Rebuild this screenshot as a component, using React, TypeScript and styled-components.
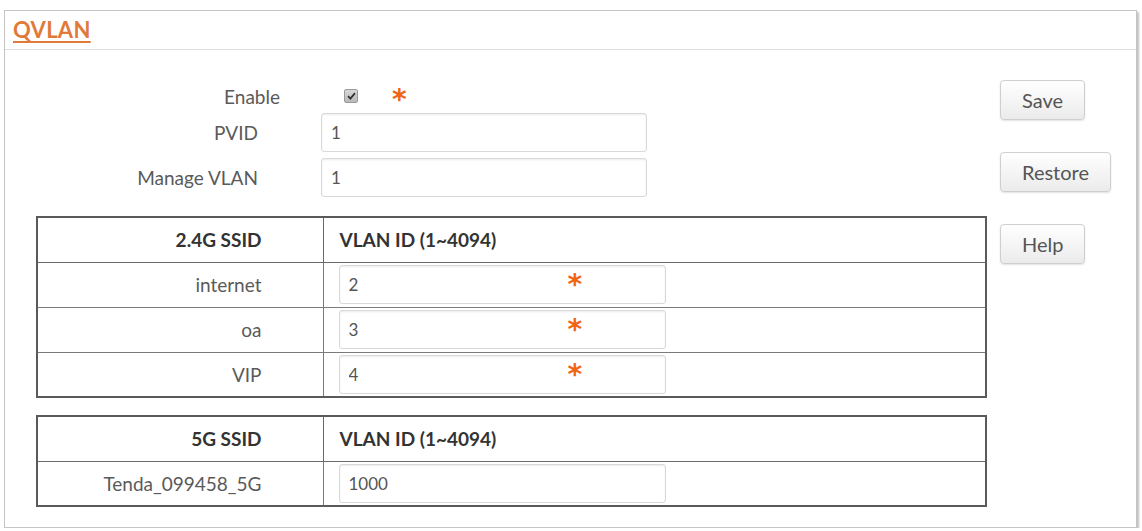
import React from "react";
import styled, { createGlobalStyle } from "styled-components";

const GlobalStyle = createGlobalStyle`
  html, body { margin: 0; padding: 0; background: #ffffff; }
  body { font-family: Lato, "Open Sans", "Liberation Sans", sans-serif; color: #5a5a5a; }
  * { box-sizing: border-box; }
`;

const Frame = styled.div`
  margin: 10px 0 0 4px;
  width: 1133px;
  height: 518px;
  border: 1px solid #c4c4c4;
  box-shadow: 2px 2px 2px rgba(0, 0, 0, 0.25);
  background: #fff;
`;

const Header = styled.div`
  height: 39px;
  border-bottom: 1px solid #dcdcdc;
  padding-left: 8px;
  display: flex;
  align-items: flex-end;
`;

const Title = styled.span`
  font-size: 22px;
  font-weight: 700;
  color: #e07a38;
  text-decoration: underline;
  text-underline-offset: 3px;
  text-decoration-thickness: 2px;
  line-height: 1;
  padding-bottom: 8px;
  letter-spacing: 0.3px;
`;

const Body = styled.div`
  display: flex;
  align-items: flex-start;
  padding-left: 31px;
`;

const Main = styled.div`
  width: 951px;
  padding-top: 35px;
  display: flex;
  flex-direction: column;
`;

const Side = styled.div`
  margin-left: 13px;
  padding-top: 30px;
  display: flex;
  flex-direction: column;
  align-items: flex-start;
  gap: 32px;
`;

const Button = styled.button`
  height: 40px;
  padding: 0 21px;
  font-family: inherit;
  font-size: 20px;
  color: #555;
  background: linear-gradient(#ffffff, #ebebeb);
  border: 1px solid #cfcfcf;
  border-radius: 4px;
  box-shadow: 0 1px 2px rgba(0, 0, 0, 0.12);
`;

const Form = styled.div`
  display: flex;
  flex-direction: column;
  gap: 6px;
`;

const FormRow = styled.div`
  display: flex;
  align-items: center;
`;

const Label = styled.div<{ $width: number }>`
  width: ${(p) => p.$width}px;
  text-align: right;
  font-size: 19px;
  color: #5a5a5a;
`;

const Control = styled.div<{ $gap: number }>`
  margin-left: ${(p) => p.$gap}px;
  display: flex;
  align-items: center;
`;

const Check = styled.span`
  width: 14px;
  height: 14px;
  border: 1px solid #9a9a9a;
  border-radius: 2px;
  background: linear-gradient(#d8d8d8, #b9b9b9);
  display: inline-flex;
  align-items: center;
  justify-content: center;
`;

const Star = styled.span`
  color: #f06414;
  font-family: "DejaVu Sans", sans-serif;
  font-size: 28px;
  font-weight: 700;
  line-height: 28px;
  height: 28px;
  display: inline-block;
`;

const EnableStar = styled(Star)`
  margin-left: 34px;
  margin-top: 8px;
`;

const TextInput = styled.input<{ $w: number }>`
  width: ${(p) => p.$w}px;
  height: 39px;
  border: 1px solid #d9d9d9;
  border-radius: 3px;
  box-shadow: inset 0 1px 2px rgba(0, 0, 0, 0.08);
  padding: 0 9px;
  font-family: inherit;
  font-size: 17px;
  color: #555;
  background: #fff;
  outline: none;
`;

const Table = styled.table<{ $mt: number }>`
  width: 951px;
  margin-top: ${(p) => p.$mt}px;
  border-collapse: collapse;
  border: 2px solid #5a5a5a;
  table-layout: fixed;
`;

const HeadCell = styled.th<{ $first?: boolean }>`
  height: 45px;
  border: 1px solid #6a6a6a;
  font-size: 19px;
  font-weight: 700;
  color: #333;
  text-align: ${(p) => (p.$first ? "right" : "left")};
  padding: ${(p) => (p.$first ? "0 61px 0 0" : "0 0 0 16px")};
  width: ${(p) => (p.$first ? "286px" : "auto")};
`;

const Cell = styled.td<{ $first?: boolean }>`
  height: 45px;
  border: 1px solid #7a7a7a;
  font-size: 19px;
  color: #5a5a5a;
  text-align: ${(p) => (p.$first ? "right" : "left")};
  padding: ${(p) => (p.$first ? "0 61px 0 0" : "0 0 0 15px")};
  vertical-align: middle;
`;

const InputWrap = styled.div`
  position: relative;
  display: inline-block;
  vertical-align: middle;
`;

const OverStar = styled(Star)`
  position: absolute;
  left: 229px;
  top: 6px;
`;

const CheckMark = () => (
  <svg width="9" height="8" viewBox="0 0 9 8">
    <path d="M1 4.2 L3.4 6.6 L8 1.2" stroke="#333" strokeWidth="1.8" fill="none" />
  </svg>
);

const ssids24 = [
  { name: "internet", vlan: "2" },
  { name: "oa", vlan: "3" },
  { name: "VIP", vlan: "4" },
];

export default function App() {
  return (
    <>
      <GlobalStyle />
      <Frame>
        <Header>
          <Title>QVLAN</Title>
        </Header>
        <Body>
          <Main>
            <Form>
              <FormRow style={{ height: 22 }}>
                <Label $width={244}>Enable</Label>
                <Control $gap={64}>
                  <Check>
                    <CheckMark />
                  </Check>
                  <EnableStar>*</EnableStar>
                </Control>
              </FormRow>
              <FormRow>
                <Label $width={222}>PVID</Label>
                <Control $gap={63}>
                  <TextInput $w={326} defaultValue="1" />
                </Control>
              </FormRow>
              <FormRow>
                <Label $width={222}>Manage VLAN</Label>
                <Control $gap={63}>
                  <TextInput $w={326} defaultValue="1" />
                </Control>
              </FormRow>
            </Form>

            <Table $mt={19}>
              <thead>
                <tr>
                  <HeadCell $first>2.4G SSID</HeadCell>
                  <HeadCell>VLAN ID (1~4094)</HeadCell>
                </tr>
              </thead>
              <tbody>
                {ssids24.map((s) => (
                  <tr key={s.name}>
                    <Cell $first>{s.name}</Cell>
                    <Cell>
                      <InputWrap>
                        <TextInput $w={327} defaultValue={s.vlan} />
                        <OverStar>*</OverStar>
                      </InputWrap>
                    </Cell>
                  </tr>
                ))}
              </tbody>
            </Table>

            <Table $mt={17}>
              <thead>
                <tr>
                  <HeadCell $first>5G SSID</HeadCell>
                  <HeadCell>VLAN ID (1~4094)</HeadCell>
                </tr>
              </thead>
              <tbody>
                <tr>
                  <Cell $first>Tenda_099458_5G</Cell>
                  <Cell>
                    <InputWrap>
                      <TextInput $w={327} defaultValue="1000" />
                    </InputWrap>
                  </Cell>
                </tr>
              </tbody>
            </Table>
          </Main>
          <Side>
            <Button>Save</Button>
            <Button>Restore</Button>
            <Button>Help</Button>
          </Side>
        </Body>
      </Frame>
    </>
  );
}
